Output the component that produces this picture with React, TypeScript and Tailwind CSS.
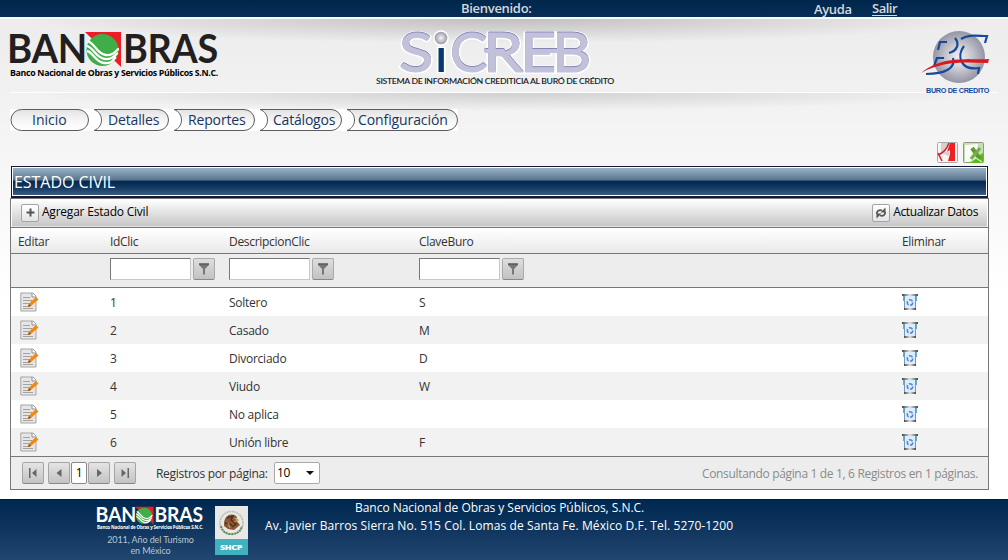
import React from "react";

const rows = [
  { id: 1, desc: "Soltero", clave: "S" },
  { id: 2, desc: "Casado", clave: "M" },
  { id: 3, desc: "Divorciado", clave: "D" },
  { id: 4, desc: "Viudo", clave: "W" },
  { id: 5, desc: "No aplica", clave: "" },
  { id: 6, desc: "Unión libre", clave: "F" },
];

const gridCols = "grid grid-cols-[92px_119px_190px_483px_1fr] pl-[7px]";

function BanobrasLogo({ className, light }: { className: string; light?: boolean }) {
  const ink = light ? "#ffffff" : "#231f20";
  return (
    <svg className={`overflow-visible ${className}`} viewBox="0 0 210 48" fontFamily="Lato, sans-serif">
      <g fill={ink} fontWeight="700" fontSize="40">
        <text x="-3" y="31.500" textLength="80" lengthAdjust="spacingAndGlyphs">BAN</text>
        <text x="113" y="31.500" textLength="95" lengthAdjust="spacingAndGlyphs">BRAS</text>
      </g>
      <path d="M75 1H111V36Z" fill="#ee1c25" />
      <circle cx="92.500" cy="19" r="16" fill="#3fae49" />
      <g fill="none" stroke="#fff" strokeWidth="2.300">
        <path d="M78 10C86 14 87 23 96 24S106 18 109 18" />
        <path d="M77 15C84 17 86 27 95 28S105 23 108 22" />
        <path d="M77 20C83 21 85 31 94 32S103 28 106 26" />
      </g>
      <text x="0" y="45" fontFamily="'Open Sans', sans-serif" fontWeight="700" fontSize="8.500" fill={light ? "#fff" : "#000"} textLength="208" lengthAdjust="spacingAndGlyphs">
        Banco Nacional de Obras y Servicios Públicos S.N.C.
      </text>
    </svg>
  );
}

function SicrebLogo() {
  const letters = (
    <>
      <text x="29" y="53" textLength="34" lengthAdjust="spacingAndGlyphs">S</text>
      <text x="80" y="53" textLength="37" lengthAdjust="spacingAndGlyphs">C</text>
      <text x="113" y="53" textLength="40" lengthAdjust="spacingAndGlyphs">R</text>
      <text x="150" y="53" textLength="36" lengthAdjust="spacingAndGlyphs">E</text>
      <text x="182" y="53" textLength="39" lengthAdjust="spacingAndGlyphs">B</text>
      <path d="M116 32H133M160 32H207" strokeWidth="4" />
    </>
  );
  return (
    <svg className="h-[70px] w-[250px] overflow-visible" viewBox="0 0 250 70" fontFamily="Lato, sans-serif">
      <defs>
        <radialGradient id="dot"><stop stopColor="#f4f4f6" /><stop offset="1" stopColor="#9b9aa8" /></radialGradient>
      </defs>
      <g fontSize="55" fontWeight="400" strokeLinejoin="round" strokeLinecap="round">
        <g fill="#fff" stroke="#fff" strokeWidth="4">{letters}</g>
        <g transform="translate(0 -1)" fill="#8583b3" stroke="#8583b3" strokeWidth="1">{letters}</g>
        <g fill="#c2c1da" stroke="#c2c1da" strokeWidth="1">{letters}</g>
      </g>
      <text x="64" y="53" fontSize="46" fontWeight="400" fill="#06396d" stroke="#fff" strokeWidth="2.500" paintOrder="stroke" textLength="14" lengthAdjust="spacingAndGlyphs">i</text>
      <circle cx="71" cy="19" r="7.800" fill="#fff" />
      <circle cx="71" cy="19" r="6.300" fill="url(#dot)" />
      <text x="6" y="64.500" fontFamily="Lato, sans-serif" fontWeight="600" fontSize="7.700" fill="#222" textLength="238" lengthAdjust="spacingAndGlyphs">
        SISTEMA DE INFORMACIÓN CREDITICIA AL BURÓ DE CRÉDITO
      </text>
    </svg>
  );
}

function BuroLogo() {
  return (
    <svg className="h-[66px] w-[70px]" viewBox="0 0 70 66">
      <defs>
        <radialGradient id="globe"><stop stopColor="#f1f1f4" /><stop offset=".5" stopColor="#c7c7ce" /><stop offset="1" stopColor="#9494a4" /></radialGradient>
      </defs>
      <circle cx="39" cy="28" r="26" fill="url(#globe)" />
      <g fill="none" stroke="#144a9b" strokeWidth="2.200">
        <path d="M18 21L20 13H27" />
        <path d="M35 9C40 15 37 22 29 24" />
        <path d="M14 37L17 29H24M33 29C36 39 25 45 6 45" />
        <path d="M41 10C48 5 58 7 67 7L65 14" />
        <path d="M44 17C36 27 41 42 59 39L58 45" />
      </g>
      <path d="M1 44C22 27 43 31 69 30L68 34C44 33 22 32 1 44Z" fill="#d91920" />
      <text x="6" y="63.500" fontFamily="'Liberation Sans', sans-serif" fontWeight="700" fontSize="6.500" fill="#144a9b" textLength="63" lengthAdjust="spacingAndGlyphs">
        BURO DE CREDITO
      </text>
    </svg>
  );
}

function PdfIcon() {
  return (
    <svg className="h-[22px] w-[21px]" viewBox="0 0 21 22">
      <rect x=".5" y=".5" width="20" height="20" rx="1" fill="#f7f4f2" stroke="#aaa" />
      <path d="M4 1H13L8 10H12V14L4 11Z" fill="#d5d0ce" />
      <path d="M13 1H18V19H11L13 12V8L10 10Z" fill="#ed2024" />
      <path d="M12 1C10 7 6 11 1 13M1 11L5 19" fill="none" stroke="#d8232a" strokeWidth="1.600" />
    </svg>
  );
}

function ExcelIcon() {
  return (
    <svg className="h-[22px] w-[21px]" viewBox="0 0 21 22">
      <rect x=".5" y=".5" width="20" height="20" rx="1" fill="#c6dcb2" stroke="#8b9b80" />
      <path d="M2 3L15 2L13 19L5 20H2Z" fill="#fafdf7" />
      <path d="M5 21L20 11V21Z" fill="#62b51d" />
      <path d="M9 6L17 17" stroke="#5b9d2b" strokeWidth="4.200" />
      <path d="M17 6L8 17" stroke="#79ad52" strokeWidth="3.400" />
      <path d="M7 20L13 16L19 20" fill="none" stroke="#d5efbe" strokeWidth="1.200" />
    </svg>
  );
}

function EditIcon() {
  return (
    <svg className="h-5 w-[19px]" viewBox="0 0 19 20">
      <path d="M.8 1H13L16 4V19H.8Z" fill="#e6e6e6" stroke="#a5a5a5" />
      <path d="M12 1V5H16" fill="#fff" stroke="#777" strokeWidth=".8" />
      <path d="M3 5.500H10M3 8.500H12M3 11.500H10M3 14.500H8M3 16.500H13" stroke="#a2a2a2" strokeWidth="1" />
      <path d="M8 15L9 11.500L16 5L18.500 7.500L11 14Z" fill="#f08a16" />
      <path d="M8 15L9 12L11 14Z" fill="#6d4a2c" />
    </svg>
  );
}

function TrashIcon() {
  return (
    <svg className="h-4 w-4" viewBox="0 0 16 16">
      <defs>
        <linearGradient id="lid"><stop stopColor="#444" /><stop offset=".5" stopColor="#e5e5e5" /><stop offset="1" stopColor="#444" /></linearGradient>
      </defs>
      <rect x="2" y="2" width="12" height="12" fill="#dcecfb" />
      <path d="M1.500 2V7M14.500 2V7" stroke="#69a9c4" strokeWidth="1" />
      <path d="M2.500 2V14M13.500 2V14" stroke="#6c9cc0" strokeWidth="1" />
      <rect y="0" width="16" height="2" fill="url(#lid)" />
      <rect x="2" y="14" width="12" height="2" fill="url(#lid)" />
      <circle cx="8" cy="8.500" r="2.700" fill="none" stroke="#4d80db" strokeWidth="1.500" strokeDasharray="4 1.650" />
    </svg>
  );
}

function ToolIcon({ children }: { children: React.ReactNode }) {
  return (
    <span className="flex h-[18px] w-[18px] items-center justify-center rounded-[2px] border border-[#a3a3a3] bg-linear-to-b from-white to-[#e4e4e4]">
      {children}
    </span>
  );
}

function Filter() {
  return (
    <div className="flex h-[33px] items-start gap-[2px] pt-1">
      <input className="h-[22px] w-[81px] border border-[#c8c8c8] border-t-[#777] border-l-[#777] bg-white" />
      <button className="flex h-[22px] w-[22px] items-center justify-center rounded-[2px] border border-[#aaa] border-b-[#888] bg-linear-to-b from-[#dedede] to-[#c2c2c2]">
        <svg className="h-3 w-3" viewBox="0 0 12 12">
          <path d="M1 .5H11V2L7 6V11.500H5V6L1 2Z" fill="#777" />
          <path d="M1 1H11" stroke="#4c4c4c" />
        </svg>
      </button>
    </div>
  );
}

function PageButton({ d, className }: { d: string; className: string }) {
  return (
    <button className={`flex h-[22px] w-[22px] items-center justify-center rounded-[2px] border border-[#a5a5a5] border-b-[#888] bg-linear-to-b from-[#e4e4e4] to-[#c3c3c3] ${className}`}>
      <svg className="h-[10px] w-[10px]" viewBox="0 0 10 10"><path d={d} fill="#666" /></svg>
    </button>
  );
}

function NavItem({ label, width, first, text }: { label: string; width: number; first?: boolean; text: string }) {
  const edge = width - 11;
  const shape = first
    ? `M11.500 .5H${edge}A10.500 10.500 0 0 1 ${edge} 21.500H11.500A10.500 10.500 0 0 1 11.500 .5Z`
    : `M1 .5H${edge}A10.500 10.500 0 0 1 ${edge} 21.500H1C11 18 11 4 1 .5Z`;
  return (
    <a className="relative flex h-[22px] items-center bg-white text-[14px] text-[#17365d]" style={{ width }}>
      <svg className="absolute inset-0" width={width} height="22">
        <defs><linearGradient id="nav" x2="0" y2="1"><stop stopColor="#e3e3e3" /><stop offset=".6" stopColor="#f8f8f8" /><stop offset="1" stopColor="#fff" /></linearGradient></defs>
        <path d={shape} fill="url(#nav)" stroke="#5c5c5c" />
      </svg>
      <span className={`relative whitespace-nowrap leading-none ${text}`}>{label}</span>
    </a>
  );
}

function Emblem() {
  return (
    <svg className="h-[49px] w-[33px]" viewBox="0 0 33 49">
      <path d="M0 0H33V34H0Z" fill="#e8e8e6" />
      <path d="M0 33H33V49H0Z" fill="#3fb1bf" />
      <circle cx="16.500" cy="17" r="11.500" fill="none" stroke="#b0b1a8" strokeWidth="1.600" strokeDasharray="1 .7" />
      <path d="M6 20Q8 28 16.500 28T27 20" fill="none" stroke="#638c58" strokeWidth="2" strokeDasharray="2 .8" />
      <path d="M9 18C9 9 17 6 22 11L21 14L25 19L19 24L13 23L9 20Z" fill="#8d5733" />
      <path d="M12 12L18 10L16 14L21 18L17 21M10 17L17 19" fill="none" stroke="#4c2e22" strokeWidth="1.400" />
      <path d="M19 12L23 14L19 16M13 17L15 22" fill="none" stroke="#bd985e" strokeWidth="1.200" />
      <text x="5" y="43.500" fontFamily="'Open Sans', sans-serif" fontWeight="800" fontSize="7" fill="#fff" textLength="22" lengthAdjust="spacingAndGlyphs">SHCP</text>
    </svg>
  );
}

export default function App() {
  return (
    <div className="flex h-[560px] w-[1008px] flex-col overflow-hidden bg-linear-to-b from-[#ececec] from-[18px] via-[#f6f6f6] via-[160px] to-white to-[300px] font-['Open_Sans','Noto_Sans',sans-serif] text-[12px] tracking-[-0.3px] text-[#333]">
      <div className="flex h-[17px] shrink-0 items-start bg-linear-to-b from-[#00264b] to-[#082e58] text-[13px] leading-[16px] font-semibold tracking-[0px] text-[#d5d9de]">
        <span className="ml-[461px] w-[353px] tracking-[-0.3px]">Bienvenido:</span>
        <span className="w-[58px] pt-px tracking-[-0.35px]">Ayuda</span>
        <span className="h-4 border-b border-[#d5d9de] tracking-[-0.5px]">Salir</span>
      </div>
      <div className="h-[2px] shrink-0 bg-[#f8f8f8]" />

      <header className="mx-[10px] flex h-[74px] shrink-0 border-b border-white bg-[radial-gradient(ellipse_48%_24px_at_50%_0px,#c0c0c0,transparent)]">
        <BanobrasLogo className="mt-3 h-[48px] w-[210px]" />
        <div className="ml-[150px] w-[250px]"><SicrebLogo /></div>
        <div className="mt-[10px] ml-[300px] w-[70px]"><BuroLogo /></div>
      </header>

      <div className="mx-[10px] flex h-[73px] shrink-0 flex-col bg-[radial-gradient(ellipse_48%_18px_at_50%_0px,#d0d0d0,transparent)]">
        <nav className="mt-4 flex h-[22px]">
          <NavItem label="Inicio" width={79} first text="pl-[22px] tracking-[0px]" />
          <div className="w-[4px] bg-white" />
          <NavItem label="Detalles" width={76} text="pl-[15px] tracking-[-0.15px]" />
          <div className="w-[4px] bg-white" />
          <NavItem label="Reportes" width={82} text="pl-[15px] tracking-[-0.15px]" />
          <div className="w-[4px] bg-white" />
          <NavItem label="Catálogos" width={83} text="pl-[14px] tracking-[-0.2px]" />
          <div className="w-[4px] bg-white" />
          <NavItem label="Configuración" width={112} text="pl-[12px] tracking-[-0.1px]" />
        </nav>
        <div className="mt-[11px] flex justify-end gap-[5px] pr-[14px]"><PdfIcon /><ExcelIcon /></div>
      </div>

      <section className="mx-[11px] flex h-[32px] w-[977px] shrink-0 border border-b-[2px] border-[#171933] bg-white p-px">
        <h1 className="flex-1 bg-[linear-gradient(180deg,#9ab2c6_0%,#59748e_45%,#002850_48%,#11365f_70%,#385b81_100%)] pl-[1px] text-[16px] leading-[29px] tracking-[-0.05px] text-white">ESTADO CIVIL</h1>
      </section>

      <main className="ml-[10px] h-[292px] w-[979px] shrink-0 border border-[#777] bg-white">
        <div className="mx-px flex h-[28px] items-center justify-between border-b border-[#e2e2e2] bg-linear-to-b from-white to-[#c7c7c7] pr-[9px] pl-[9px] text-black">
          <button className="flex items-center gap-[3px]">
            <ToolIcon><svg className="h-[9px] w-[9px]" viewBox="0 0 9 9"><path d="M4.500.5V8.500M.5 4.500H8.500" stroke="#555" strokeWidth="2" /></svg></ToolIcon>
            <span className="-mt-[1px] tracking-[-0.22px]">Agregar Estado Civil</span>
          </button>
          <button className="flex items-center gap-[3px]">
            <ToolIcon><svg className="h-3 w-3" viewBox="0 0 12 12"><path d="M1.800 7C1.500 4 4 2.500 7 3.500M10.200 5C10.500 8 8 9.500 5 8.500" fill="none" stroke="#555" strokeWidth="1.800" /><path d="M10.500 .5V5.500H5.500ZM1.500 11.500V6.500H6.500Z" fill="#555" /></svg></ToolIcon>
            <span className="-mt-[1px] tracking-[-0.36px]">Actualizar Datos</span>
          </button>
        </div>
        <div className={`${gridCols} h-[27px] items-center border-y border-[#777] bg-linear-to-b from-white to-[#e9e9e9] pt-[3px]`}>
          <span>Editar</span><span>IdClic</span><span>DescripcionClic</span><span>ClaveBuro</span><span>Eliminar</span>
        </div>
        <div className={`${gridCols} h-[34px] border-b border-[#777] bg-[#ededed]`}>
          <span /><Filter /><Filter /><Filter /><span />
        </div>
        {rows.map((row) => (
          <div key={row.id} className={`${gridCols} h-[28px] items-center ${row.id % 2 ? "bg-white" : "bg-[#f2f2f2]"}`}>
            <span className="-mt-px pl-[2px]"><EditIcon /></span>
            <span className="pt-[2px]">{row.id}</span>
            <span className="pt-[2px] tracking-[-0.25px]">{row.desc}</span>
            <span className="pt-[2px]">{row.clave}</span>
            <span><TrashIcon /></span>
          </div>
        ))}
        <div className="flex h-[33px] items-center border-t border-[#777] bg-[#ededed] pr-[10px] pl-[11px]">
          <PageButton className="mr-1" d="M1 0H2.500V10H1ZM8.500 1V9L4 5Z" />
          <PageButton className="mr-px" d="M7.500 1V9L2.500 5Z" />
          <span className="flex h-[22px] w-4 items-center justify-center rounded-[2px] border border-[#888] bg-white text-black">1</span>
          <PageButton className="mr-1 ml-px" d="M3 1V9L8 5Z" />
          <PageButton className="" d="M1.500 1V9L6 5ZM7.500 0H9V10H7.500Z" />
          <span className="ml-[20px] w-[118px] pt-[2px] whitespace-nowrap">Registros por página:</span>
          <span className="flex h-[22px] w-[46px] items-center justify-between rounded-[2px] border border-[#aaa] bg-white pr-[5px] pl-[2px] text-black">
            10<svg className="h-1 w-2" viewBox="0 0 8 4"><path d="M0 0H8L4 4Z" fill="#111" /></svg>
          </span>
          <span className="ml-auto pt-[2px] tracking-[-0.335px] text-[#8a8a8a]">Consultando página 1 de 1, 6 Registros en 1 páginas.</span>
        </div>
      </main>

      <div className="h-[9px] shrink-0 bg-white" />
      <footer className="flex h-[61px] shrink-0 border-t border-[#0b1932] bg-linear-to-b from-[#00274f] to-[#21466f] text-white">
        <div className="ml-[97px] flex w-[118px] flex-col pt-[6px]">
          <BanobrasLogo light className="h-[25px] w-[107px]" />
          <p className="mt-[4px] w-[107px] text-center font-['Lato',sans-serif] text-[9px] leading-[10.500px] tracking-[-0.1px] text-[#b9c6d4]">2011, Año del Turismo<br />en México</p>
        </div>
        <div className="pt-[6px]"><Emblem /></div>
        <div className="ml-[17px] w-[468px] whitespace-nowrap">
          <p className="-mt-px pl-[90px] leading-[18px] tracking-[-0.03px]">Banco Nacional de Obras y Servicios Públicos, S.N.C.</p>
          <p className="leading-[18px] tracking-[0.1px]">Av. Javier Barros Sierra No. 515 Col. Lomas de Santa Fe. México D.F. Tel. 5270-1200</p>
        </div>
      </footer>
    </div>
  );
}
